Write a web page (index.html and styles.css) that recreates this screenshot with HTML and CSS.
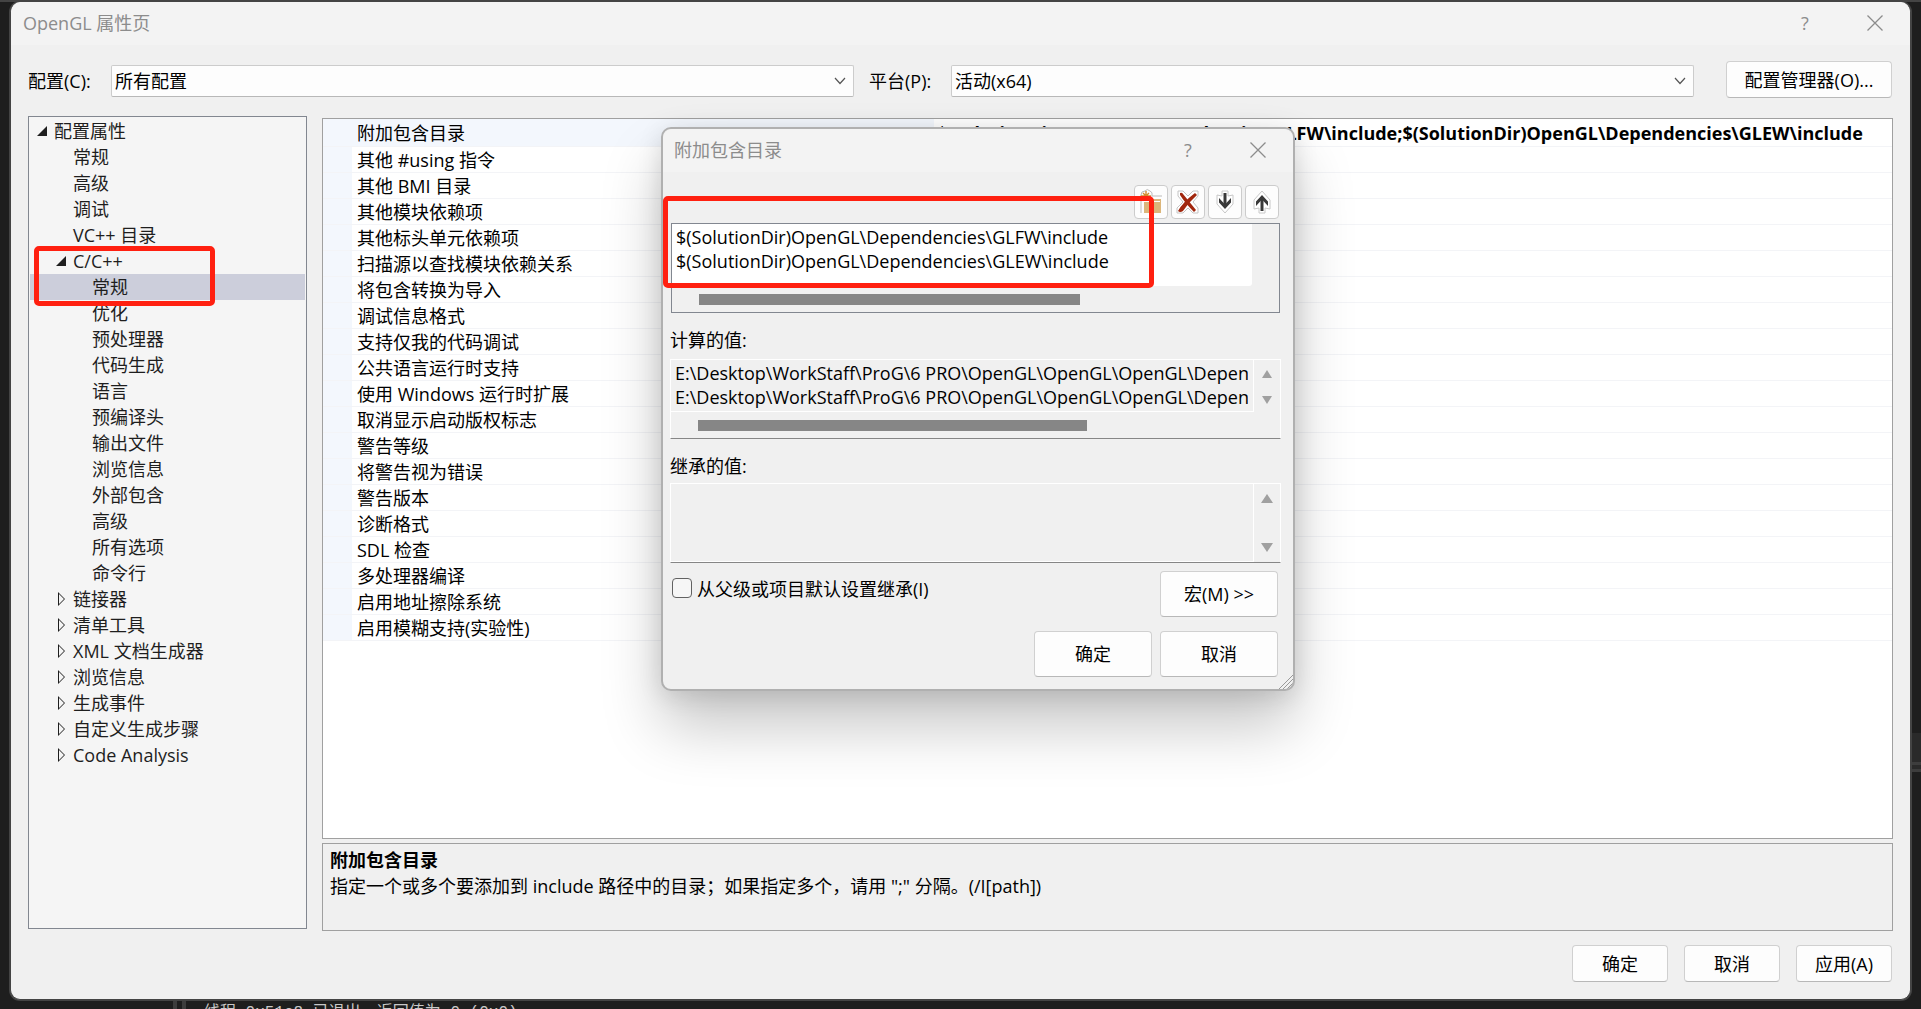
FILE: index.html
```html
<!DOCTYPE html>
<html lang="zh-CN">
<head>
<meta charset="utf-8">
<title>OpenGL 属性页</title>
<link rel="stylesheet" href="styles.css">
</head>
<body>
<div class="backdrop" aria-hidden="true">
  <span class="top-mark"></span>
  <span class="side-strip"></span>
  <span class="output-line">线程 0x51c8 已退出，返回值为 0 (0x0)。</span>
</div>
<main class="window">
  <header class="titlebar">
    <h1 class="title">OpenGL 属性页</h1>
    <button class="caption-btn" type="button" aria-label="帮助">?</button>
    <button class="caption-btn" type="button" aria-label="关闭"><svg width="16" height="16" viewBox="0 0 16 16"><path d="M0.5 0.5L15.5 15.5M15.5 0.5L0.5 15.5" stroke="#8c8c8c" stroke-width="1.3"/></svg></button>
  </header>
  <div class="config-bar">
    <label class="config-label" for="cfg">配置(C):</label>
    <span class="select-wrap"><select id="cfg"><option>所有配置</option></select><svg class="chevron" width="12" height="8" viewBox="0 0 12 8"><path d="M1 1L6 6.5L11 1" fill="none" stroke="#555" stroke-width="1.2"/></svg></span>
    <label class="config-label platform" for="plat">平台(P):</label>
    <span class="select-wrap"><select id="plat"><option>活动(x64)</option></select><svg class="chevron" width="12" height="8" viewBox="0 0 12 8"><path d="M1 1L6 6.5L11 1" fill="none" stroke="#555" stroke-width="1.2"/></svg></span>
    <button class="btn manager" type="button">配置管理器(O)...</button>
  </div>
  <div class="content">
    <nav class="tree">
      <ul>
        <li class="l1 open">配置属性</li>
        <li class="l2">常规</li>
        <li class="l2">高级</li>
        <li class="l2">调试</li>
        <li class="l2">VC++ 目录</li>
        <li class="l2 open">C/C++</li>
        <li class="l3 selected">常规</li>
        <li class="l3">优化</li>
        <li class="l3">预处理器</li>
        <li class="l3">代码生成</li>
        <li class="l3">语言</li>
        <li class="l3">预编译头</li>
        <li class="l3">输出文件</li>
        <li class="l3">浏览信息</li>
        <li class="l3">外部包含</li>
        <li class="l3">高级</li>
        <li class="l3">所有选项</li>
        <li class="l3">命令行</li>
        <li class="l2 closed">链接器</li>
        <li class="l2 closed">清单工具</li>
        <li class="l2 closed">XML 文档生成器</li>
        <li class="l2 closed">浏览信息</li>
        <li class="l2 closed">生成事件</li>
        <li class="l2 closed">自定义生成步骤</li>
        <li class="l2 closed">Code Analysis</li>
      </ul>
      <span class="highlight tree-highlight"></span>
    </nav>
    <section class="detail">
      <div class="grid-box">
        <table class="props">
          <tbody>
            <tr class="current"><th scope="row">附加包含目录</th><td>$(SolutionDir)OpenGL\Dependencies\GLFW\include;$(SolutionDir)OpenGL\Dependencies\GLEW\include</td></tr>
            <tr><th scope="row">其他 #using 指令</th><td></td></tr>
            <tr><th scope="row">其他 BMI 目录</th><td></td></tr>
            <tr><th scope="row">其他模块依赖项</th><td></td></tr>
            <tr><th scope="row">其他标头单元依赖项</th><td></td></tr>
            <tr><th scope="row">扫描源以查找模块依赖关系</th><td></td></tr>
            <tr><th scope="row">将包含转换为导入</th><td></td></tr>
            <tr><th scope="row">调试信息格式</th><td></td></tr>
            <tr><th scope="row">支持仅我的代码调试</th><td></td></tr>
            <tr><th scope="row">公共语言运行时支持</th><td></td></tr>
            <tr><th scope="row">使用 Windows 运行时扩展</th><td></td></tr>
            <tr><th scope="row">取消显示启动版权标志</th><td></td></tr>
            <tr><th scope="row">警告等级</th><td></td></tr>
            <tr><th scope="row">将警告视为错误</th><td></td></tr>
            <tr><th scope="row">警告版本</th><td></td></tr>
            <tr><th scope="row">诊断格式</th><td></td></tr>
            <tr><th scope="row">SDL 检查</th><td></td></tr>
            <tr><th scope="row">多处理器编译</th><td></td></tr>
            <tr><th scope="row">启用地址擦除系统</th><td></td></tr>
            <tr><th scope="row">启用模糊支持(实验性)</th><td></td></tr>
          </tbody>
        </table>
      </div>
      <div class="description">
        <h2>附加包含目录</h2>
        <p>指定一个或多个要添加到 include 路径中的目录；如果指定多个，请用 ";" 分隔。(/I[path])</p>
      </div>
    </section>
  </div>
  <footer class="actions">
    <button class="btn" type="button">确定</button>
    <button class="btn" type="button">取消</button>
    <button class="btn" type="button">应用(A)</button>
  </footer>
</main>

<section class="dialog" role="dialog" aria-labelledby="dlg-title">
  <header class="titlebar dialog-titlebar">
    <h2 class="title" id="dlg-title">附加包含目录</h2>
    <button class="caption-btn" type="button" aria-label="帮助">?</button>
    <button class="caption-btn" type="button" aria-label="关闭"><svg width="16" height="16" viewBox="0 0 16 16"><path d="M0.5 0.5L15.5 15.5M15.5 0.5L0.5 15.5" stroke="#8c8c8c" stroke-width="1.3"/></svg></button>
  </header>
  <div class="dialog-body">
    <div class="toolbar">
      <button class="tool" type="button" aria-label="新行"><svg width="26" height="28" viewBox="0 0 26 28"><path d="M3 12Q1 9 3 7Q3 3 7 3Q9 0 12 3Q15 4 14 8H24" fill="none" stroke="#bbb"/><path d="M3 12V25" stroke="#bbb"/><path d="M8 3V13M3 8H13M5 5L11 11M11 5L5 11" stroke="#d08a2c" stroke-width="1.4"/><path d="M6 14H13V11H23V25H6Z" fill="#dcb67a"/><path d="M14 13.500H22" stroke="#fff" stroke-width="1"/></svg></button>
      <button class="tool" type="button" aria-label="删除"><svg width="26" height="28" viewBox="0 0 26 28"><path d="M3 3H8L13 8L18 3H23V8L18 14L23 20V25H18L13 20L8 25H2V20L8 14L3 8Z" fill="#fff" stroke="#c4c4c4"/><path d="M5 5Q7 4 8 6L21 22L19 24Q10 15 5 7Z" fill="#a1260d"/><path d="M20 5L22 7Q14 14 8 23Q5 25 3 23Q8 14 20 5Z" fill="#a1260d"/></svg></button>
      <button class="tool" type="button" aria-label="下移"><svg width="26" height="28" viewBox="0 0 26 28"><path d="M10 3H16V8L21 7V16L13 25L5 16V7L10 8Z" fill="#fff" stroke="#c8c8c8"/><path d="M13 5V19" stroke="#383838" stroke-width="3"/><path d="M7 10V14.500L13 21L19 14.500V10L13 16.500Z" fill="#383838"/></svg></button>
      <button class="tool" type="button" aria-label="上移"><svg width="26" height="28" viewBox="0 0 26 28"><path d="M10 25H16V20L21 21V12L13 3L5 12V21L10 20Z" fill="#fff" stroke="#c8c8c8"/><path d="M13 9V23" stroke="#383838" stroke-width="3"/><path d="M7 18V13.500L13 7L19 13.500V18L13 11.500Z" fill="#383838"/></svg></button>
    </div>
    <div class="pane edit-pane">
      <textarea class="paths" aria-label="附加包含目录" wrap="off" spellcheck="false">$(SolutionDir)OpenGL\Dependencies\GLFW\include
$(SolutionDir)OpenGL\Dependencies\GLEW\include</textarea>
      <div class="hscroll"><span class="thumb"></span></div>
    </div>
    <label class="field-label" for="evaluated">计算的值:</label>
    <div class="pane sunk">
      <div class="paths-clip"><textarea class="paths" id="evaluated" wrap="off" readonly spellcheck="false">E:\Desktop\WorkStaff\ProG\6 PRO\OpenGL\OpenGL\OpenGL\Dependencies\GLFW\include
E:\Desktop\WorkStaff\ProG\6 PRO\OpenGL\OpenGL\OpenGL\Dependencies\GLEW\include</textarea></div>
      <div class="vscroll"><span class="up"></span><span class="down"></span></div>
      <div class="hscroll"><span class="thumb"></span></div>
    </div>
    <label class="field-label" for="inherited">继承的值:</label>
    <div class="pane sunk tall">
      <div class="paths-clip"><textarea class="paths" id="inherited" readonly></textarea></div>
      <div class="vscroll"><span class="up"></span><span class="down"></span></div>
    </div>
    <div class="inherit-row">
      <input type="checkbox" id="inherit"><label for="inherit">从父级或项目默认设置继承(I)</label>
      <button class="btn big" type="button">宏(M) &gt;&gt;</button>
    </div>
    <div class="dialog-actions">
      <button class="btn big" type="button">确定</button>
      <button class="btn big" type="button">取消</button>
    </div>
  </div>
  <svg class="grip" width="15" height="15" viewBox="0 0 15 15"><path d="M1 15L15 1M5 15L15 5M9 15L15 9" stroke="#999"/></svg>
  <span class="highlight dialog-highlight"></span>
</section>
</body>
</html>
```
FILE: styles.css
```css
* { box-sizing: border-box; }

html, body { height: 100%; }

body {
  margin: 0;
  padding: 2px 10px 9px 10px;
  display: flex;
  background: #1e1e1e;
  overflow: hidden;
  color: #000;
  font: 18px/26px "Open Sans", "Noto Sans CJK SC", sans-serif;
}

button, select, textarea, input { font: inherit; color: inherit; margin: 0; }
h1, h2, p, ul { margin: 0; padding: 0; font-size: inherit; }

/* editor showing behind the window */
.backdrop { position: absolute; inset: 0; overflow: hidden; background: #1e1e1e; border-top: 2px solid #444; }
.top-mark { position: absolute; left: 323px; top: -2px; width: 8px; height: 2px; background: #57a64a; }
.side-strip { position: absolute; right: 0; top: 731px; width: 11px; height: 39px; background: #2a2a2a; border-bottom: 10px double #3d3d3d; }
.output-line {
  position: absolute;
  left: 173px;
  top: 998px;
  padding-left: 18px;
  border-left: 13px double #3d3d3d;
  color: #c8c8c8;
  font: 16px/26px "Liberation Mono", "Noto Sans CJK SC", monospace;
  white-space: nowrap;
}

.window {
  position: relative;
  flex: 1;
  display: flex;
  flex-direction: column;
  background: #f0f0f0;
  border: 1px solid #444;
  border-top: 0;
  border-radius: 10px;
  box-shadow: 0 0 0 1px #444;
}

.titlebar {
  display: flex;
  align-items: center;
  height: 43px;
  padding: 0 11px 2px 12px;
  background: #f3f3f3;
  border-radius: 10px 10px 0 0;
}
.title { flex: 1; font-weight: 400; color: #8c8c8c; line-height: 26px; }
.caption-btn {
  display: flex;
  align-items: center;
  justify-content: center;
  width: 48px;
  height: 40px;
  margin-left: 22px;
  padding: 0;
  border: 0;
  background: none;
  color: #8c8c8c;
}

.config-bar { display: flex; align-items: center; height: 53px; padding: 16px 18px 0 17px; }
.config-label { width: 83px; height: 32px; line-height: 32px; white-space: nowrap; }
.config-label.platform { width: 97px; padding-left: 15px; }
.select-wrap { position: relative; flex: 1; }
.config-label, .select-wrap { margin-top: 2px; }
.select-wrap select {
  display: block;
  width: 100%;
  height: 32px;
  padding: 0 3px;
  appearance: none;
  background: #fdfdfd;
  border: 1px solid #ccc;
  border-bottom-color: #b8b8b8;
  border-radius: 2px;
}
.chevron { position: absolute; right: 8px; top: 12px; }

.btn {
  width: 96px;
  height: 37px;
  padding: 0;
  background: #fdfdfd;
  border: 1px solid #d0d0d0;
  border-bottom-color: #b8b8b8;
  border-radius: 4px;
}
.btn.manager { width: 166px; margin-left: 32px; }
.btn.big { width: 118px; height: 46px; }

.content { flex: 1; display: flex; gap: 15px; padding: 18px 17px 0; min-height: 0; }

.tree {
  position: relative;
  width: 279px;
  margin-bottom: 2px;
  padding: 1px;
  background: #f5f5f5;
  border: 1px solid #828790;
  color: #1e1e1e;
}
.tree ul { list-style: none; }
.tree li { display: flex; align-items: center; height: 26px; white-space: nowrap; }
.l1 { padding-left: 24px; }
.l2 { padding-left: 43px; }
.l3 { padding-left: 62px; }
.selected { background: #cccedb; }
.open::before, .closed::before { content: ""; width: 10px; margin-left: -17px; margin-right: 7px; }
.open::before { height: 10px; background: #1e1e1e; clip-path: polygon(100% 0, 100% 100%, 0 100%); }
.closed::before {
  height: 14px;
  background: #1e1e1e;
  clip-path: polygon(evenodd, 2px 0, 9px 7px, 2px 14px, 2px 0, 3px 2px, 3px 12px, 8px 7px, 3px 2px, 2px 0);
}

.detail { flex: 1; min-width: 0; display: flex; flex-direction: column; gap: 4px; padding-top: 2px; }
.grid-box { flex: 1; background: #fff; border: 1px solid #a0a0a0; overflow: hidden; }
.props { width: 100%; table-layout: fixed; border-spacing: 0; }
.props th, .props td { height: 26px; padding: 2px 0 0; line-height: 23px; text-align: left; white-space: nowrap; border-bottom: 1px solid #f3f4f7; }
.props tr:first-child > * { height: 28px; }
.props th { width: 611px; padding-left: 34px; font-weight: 400; background: linear-gradient(#f3f7fd, #f3f7fd) 0 0 / 29px 100% no-repeat; }
.props .current th { background: #f3f7fd; }
.props td { padding-left: 3px; font-weight: 700; }
.description { height: 88px; padding: 3px 7px; border: 1px solid #a0a0a0; }

.actions { display: flex; justify-content: flex-end; gap: 16px; padding: 14px 18px 17px; }

.dialog {
  position: absolute;
  left: 661px;
  top: 127px;
  width: 634px;
  background: #f0f0f0;
  border: 2px solid #b0b0b0;
  border-radius: 10px;
  box-shadow: 0 36px 60px rgba(0, 0, 0, 0.22), 0 4px 24px rgba(0, 0, 0, 0.12);
}
.dialog-titlebar { padding-left: 11px; }
.dialog-body { padding: 13px 14px 12px 7px; }
.toolbar { display: flex; justify-content: flex-end; gap: 3px; padding-bottom: 4px; }
.tool {
  display: flex;
  align-items: center;
  justify-content: center;
  width: 34px;
  height: 34px;
  padding: 0;
  background: #fdfdfd;
  border: 1px solid #ccc;
  border-radius: 4px;
}

.pane {
  display: grid;
  grid-template-columns: 1fr 27px;
  grid-template-rows: 1fr 26px;
  height: 90px;
  border: 1px solid #828790;
}
.paths {
  display: block;
  width: 100%;
  height: 100%;
  padding: 1px 4px;
  border: 0;
  outline: 0;
  resize: none;
  overflow: hidden;
  background: #fff;
  line-height: 24px;
}
.hscroll { grid-row: 2; grid-column: 1 / 3; display: flex; align-items: center; }
.thumb { width: 381px; height: 11px; margin-left: 27px; background: #868686; }
.vscroll { display: flex; flex-direction: column; align-items: center; justify-content: space-between; padding: 10px 0 8px; border-left: 1px solid #fff; }
.up, .down { width: 10px; height: 8px; background: #a0a0a0; clip-path: polygon(50% 0, 100% 100%, 0 100%); }
.down { clip-path: polygon(0 0, 100% 0, 50% 100%); }
.sunk {
  height: 80px;
  margin-right: -2px;
  border: 1px solid #fff;
  border-bottom-color: #868686;
}
.sunk .thumb { width: 389px; }
.paths-clip { padding-right: 5px; border-bottom: 1px solid #fff; min-width: 0; }
.sunk .paths { background: #f0f0f0; }
.tall { grid-template-rows: 1fr; }
.tall .vscroll { padding: 10px 0; }
.tall .up, .tall .down { width: 12px; height: 9px; }
.edit-pane { margin: 0 -1px 0 1px; }
.edit-pane .paths { border-radius: 0 0 3px 0; }
.field-label { display: block; height: 45px; line-height: 44px; padding-top: 5px; }
.tall { margin-top: -1px; }
.edit-pane + .field-label { height: 46px; }

.inherit-row { display: flex; padding: 8px 1px 0 0; }
.inherit-row input {
  width: 20px;
  height: 20px;
  margin: 7px 5px 0 2px;
  appearance: none;
  background: #f6f6f6;
  border: 1px solid #626262;
  border-radius: 4px;
}
.inherit-row label { flex: 1; padding-top: 5px; }
.dialog-actions { display: flex; justify-content: flex-end; gap: 8px; padding: 14px 1px 0 0; }
.grip { position: absolute; right: 0; bottom: 0; border-radius: 0 0 8px 0; }

.highlight { position: absolute; border: 5px solid #ff2010; border-radius: 5px; pointer-events: none; }
.tree-highlight { left: 5px; top: 129px; width: 181px; height: 60px; }
.dialog-highlight { left: 0; top: 67px; width: 491px; height: 92px; }
```
